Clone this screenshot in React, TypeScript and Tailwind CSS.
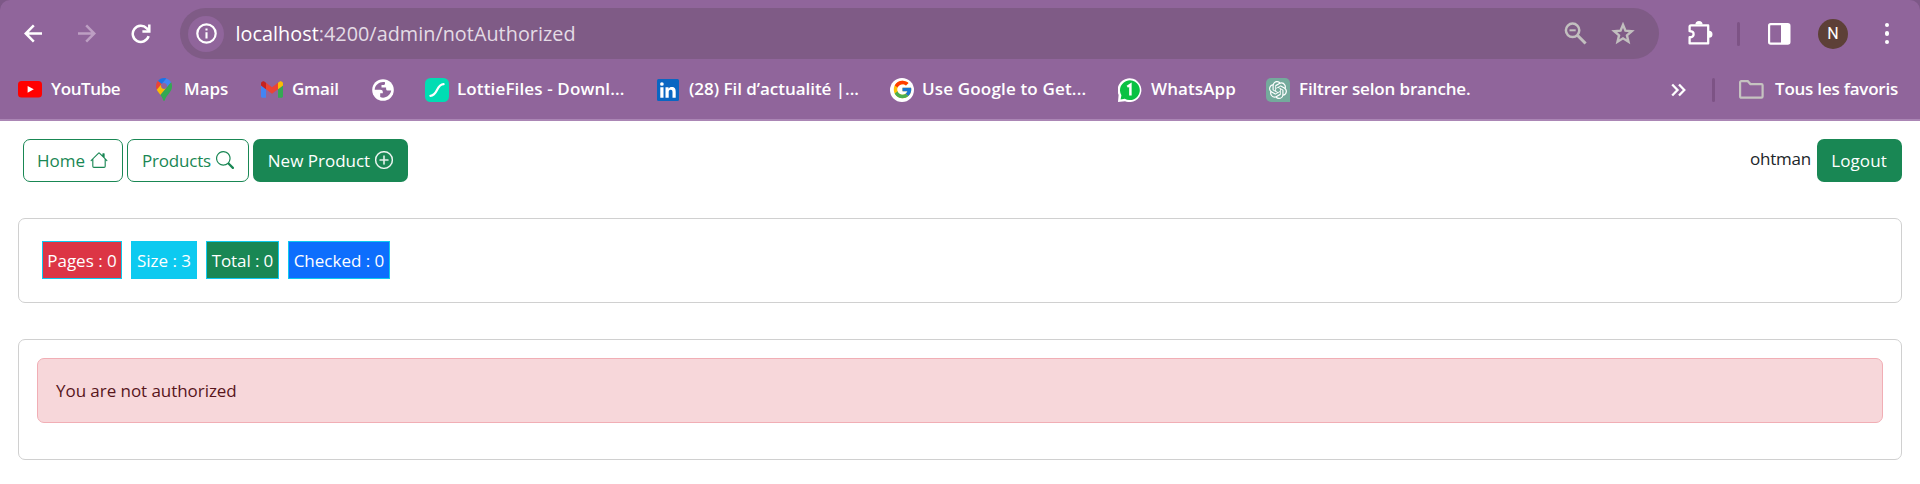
import type { ReactNode } from 'react';
import { FcGoogle } from 'react-icons/fc';
import { SiOpenai } from 'react-icons/si';
import { BsHouse, BsPlusCircle, BsSearch } from 'react-icons/bs';

function ArrowIcon({ className }: { className: string }) {
  return (
    <svg width="19" height="19" viewBox="0 0 19 19" fill="none" stroke="currentColor" strokeWidth="2.5" className={className}>
      <path d="M18 9.5H2M9.8 1.4L1.7 9.5l8.1 8.1" />
    </svg>
  );
}

function RefreshIcon() {
  return (
    <svg width="20" height="20" viewBox="0 0 20 20" fill="none" stroke="#fff" strokeWidth="2.5">
      <path d="M17.6 12.2A8.1 8.1 0 1 1 15.800 4.300L18 6.700" />
      <path d="M18.300.6v6.900h-6.900" />
    </svg>
  );
}

function InfoIcon() {
  return (
    <svg width="21" height="21" viewBox="0 0 21 21" fill="none">
      <circle cx="10.5" cy="10.5" r="9.2" stroke="#fff" strokeWidth="2.2" />
      <path d="M10.5 9.3v6.2M10.5 5.4v2.2" stroke="#fff" strokeWidth="2.1" />
    </svg>
  );
}

function ZoomOutIcon() {
  return (
    <svg width="23" height="23" viewBox="0 0 23 23" fill="none" stroke="#c2bfbf">
      <circle cx="8.6" cy="8.3" r="6.7" strokeWidth="2.5" />
      <path d="M5.5 8.3h6.2" strokeWidth="2" />
      <path d="M13.4 13.2l8.2 8.3" strokeWidth="3" />
    </svg>
  );
}

function StarIcon() {
  return (
    <svg width="24" height="23" viewBox="0 0 24 23" fill="none" stroke="#c2bfbf" strokeWidth="2.4">
      <path d="M12 2.8l2.45 5.9 6.35.55-4.85 4.15 1.5 6.25L12 16.3l-5.45 3.35 1.5-6.25L3.2 9.25l6.35-.55z" />
    </svg>
  );
}

function ExtensionIcon() {
  return (
    <svg width="26" height="26" viewBox="0 0 26 26">
      <path
        d="M4 5.4h17.2v18H2.6v-6.2c2.6 0 4-1.3 4-3s-1.4-3-4-3V6.8c0-.8.6-1.4 1.4-1.4z"
        fill="none"
        stroke="#fff"
        strokeWidth="2.3"
        strokeLinejoin="round"
      />
      <path d="M8.4 4.6a3.6 3.6 0 0 1 7.2 0zM22 10.8a3.5 3.5 0 0 1 0 7z" fill="#fff" />
    </svg>
  );
}

function SidePanelIcon() {
  return (
    <svg width="23" height="22" viewBox="0 0 23 22">
      <rect x="1.1" y="1.1" width="20.3" height="19.6" rx="1.6" fill="none" stroke="#fff" strokeWidth="2.2" />
      <path d="M13 1h8.4v19.6H13z" fill="#fff" />
    </svg>
  );
}

function YouTubeIcon() {
  return (
    <svg width="24" height="17" viewBox="0 0 24 17">
      <rect width="24" height="16.6" rx="3.6" fill="#f00" />
      <path d="M9.6 4.9v6.8l6.2-3.4z" fill="#fff" />
    </svg>
  );
}

function MapsIcon() {
  return (
    <svg width="16" height="23" viewBox="0 0 92.3 132.3">
      <path fill="#1a73e8" d="M60.2 2.2C55.8.8 51 0 46.1 0 32 0 19.3 6.4 10.8 16.5l21.8 18.3z" />
      <path fill="#ea4335" d="M10.8 16.5C4.1 24.5 0 34.9 0 46.1c0 8.7 1.7 15.7 4.6 22l28-33.3z" />
      <path fill="#4285f4" d="M46.2 28.5a17.7 17.7 0 0 1 13.5 29.1l27.5-32.7A46.1 46.1 0 0 0 60.3 2.3L32.6 34.9a17.6 17.6 0 0 1 13.6-6.4" />
      <path fill="#fbbc04" d="M46.2 63.8a17.7 17.7 0 0 1-13.5-29L4.5 68.1c4.8 10.6 12.8 19.2 21 29.9l34.1-40.5a17.5 17.5 0 0 1-13.4 6.3" />
      <path fill="#34a853" d="M59.1 109.2c15.4-24.1 33.3-35 33.3-63 0-7.7-1.9-14.9-5.2-21.3L25.6 98c2.6 3.4 5.3 7.3 7.9 11.3 9.4 14.5 6.8 23.1 12.8 23.1s3.4-8.7 12.8-23.2" />
    </svg>
  );
}

function GmailIcon() {
  return (
    <svg width="22" height="17" viewBox="52 42 88 66">
      <path fill="#4285f4" d="M58 108h14V74L52 59v43c0 3.32 2.69 6 6 6" />
      <path fill="#34a853" d="M120 108h14c3.32 0 6-2.69 6-6V59l-20 15" />
      <path fill="#fbbc04" d="M120 48v26l20-15v-8c0-7.42-8.47-11.65-14.4-7.2" />
      <path fill="#ea4335" d="M72 74V48l24 18 24-18v26L96 92" />
      <path fill="#c5221f" d="M52 51v8l20 15V48l-5.6-4.2c-5.94-4.45-14.4-.22-14.4 7.2" />
    </svg>
  );
}

function GlobeIcon() {
  return (
    <svg width="22" height="22" viewBox="0 0 22 22">
      <circle cx="11" cy="11" r="10.8" fill="#fff" />
      <path
        d="M13 3.2C8 2.2 3 5.6 2.7 10.7h5.6c1.7 0 2.5.9 2.5 2.3v1.2h-2.6v3.9c4.8 1.9 10.3-1.4 11-6.5h-3.1c-1.3 0-2-.7-2-1.9V8.5h-4.6V6h2.3C12.7 6 13 5.4 13 4.6z"
        fill="#90659b"
      />
    </svg>
  );
}

function LottieIcon() {
  return (
    <svg width="24" height="24" viewBox="0 0 24 24">
      <rect width="24" height="24" rx="5.5" fill="#00ddb3" />
      <path d="M5.4 17.8C13 17.6 11 6.4 18.6 6.2" fill="none" stroke="#fff" strokeWidth="2.2" strokeLinecap="round" />
    </svg>
  );
}

function LinkedInIcon() {
  return (
    <svg width="22" height="22" viewBox="0 0 22 22">
      <rect width="22" height="22" rx="1.5" fill="#0a66c2" />
      <path
        d="M3.3 8.3h3.2v10.4H3.3zM8.5 8.3h3v1.4c.6-1 1.7-1.7 3.2-1.7 3.2 0 4 2 4 4.8v5.9h-3.2v-5.3c0-1.4-.2-2.7-1.8-2.7s-2 1.2-2 2.6v5.4H8.5z"
        fill="#fff"
      />
      <circle cx="4.9" cy="5" r="1.85" fill="#fff" />
    </svg>
  );
}

function GoogleIcon() {
  return (
    <span className="flex size-6 items-center justify-center rounded-full bg-white">
      <FcGoogle size={21} />
    </span>
  );
}

function WhatsAppIcon() {
  return (
    <svg width="24" height="24" viewBox="0 0 24 24">
      <path d="M0 24l.6-7A11.9 11.9 0 1 1 7 23.2z" fill="#fff" />
      <path d="M2.6 21.5l.8-4.2A9.9 9.9 0 1 1 6.8 20.7z" fill="#0ac143" />
      <path d="M9.3 8.7l3.1-2v10.7" fill="none" stroke="#fff" strokeWidth="2.5" />
    </svg>
  );
}

function OpenAiIcon() {
  return (
    <span className="flex size-6 items-center justify-center rounded-[5px] rounded-br-none bg-[#74aa9c] text-white">
      <SiOpenai size={18} />
    </span>
  );
}

function FolderIcon() {
  return (
    <svg width="25" height="19" viewBox="0 0 25 19">
      <path
        d="M2.3 1.2h6.5l2.6 2.9h11c.7 0 1.2.5 1.2 1.2v11.2c0 .7-.5 1.2-1.2 1.2H2.3c-.7 0-1.2-.5-1.2-1.2V2.4c0-.7.5-1.2 1.2-1.2z"
        fill="none"
        stroke="#c5c3c0"
        strokeWidth="2.2"
      />
    </svg>
  );
}

function Bookmark({ icon, label, className }: { icon: ReactNode; label?: string; className: string }) {
  return (
    <div className={`flex h-6 shrink-0 items-center whitespace-nowrap ${className}`}>
      <span className="flex shrink-0 items-center">{icon}</span>
      {label && <span className="mt-[-2px]">{label}</span>}
    </div>
  );
}

function BrowserBar() {
  return (
    <div className="h-[121px] bg-[#7d5887]">
      <header className="h-[121px] rounded-t-[10px] border-b-2 border-[#ab86b5] bg-[#90659b] text-white">
        <div className="flex h-[67px] items-center">
          <ArrowIcon className="ml-[24px]" />
          <ArrowIcon className="ml-[34px] rotate-180 text-[#bd9fc3]" />
          <span className="ml-[35px]">
            <RefreshIcon />
          </span>
          <div className="ml-[29px] flex h-[51px] w-[1479px] items-center rounded-full bg-[#7f5b86] pl-2">
            <span className="flex size-9 items-center justify-center rounded-full bg-[#90659b]">
              <InfoIcon />
            </span>
            <span className="ml-[11.5px] grow text-[19.8px] leading-[28px] tracking-[0.04px] whitespace-nowrap text-[#e4dbe5]">
              <span className="text-white">localhost</span>:4200/admin/notAuthorized
            </span>
            <ZoomOutIcon />
            <span className="mr-[24px] ml-[24px]">
              <StarIcon />
            </span>
          </div>
          <span className="ml-[28px] flex items-center pb-px">
            <ExtensionIcon />
          </span>
          <span className="ml-[24px] h-6 w-[3px] rounded-full bg-[#7d5385]" />
          <span className="ml-[28px]">
            <SidePanelIcon />
          </span>
          <span className="ml-[27px] flex size-[30px] items-center justify-center rounded-full bg-[#5d4037] font-['Roboto',sans-serif] text-[16px]">
            N
          </span>
          <span className="ml-[36.5px] flex w-[4px] flex-col gap-1">
            <i className="size-[4.5px] rounded-full bg-white" />
            <i className="size-[4.5px] rounded-full bg-white" />
            <i className="size-[4.5px] rounded-full bg-white" />
          </span>
        </div>
        <div className="flex h-[45px] items-center pl-[18px] text-[17px] font-semibold">
          <Bookmark className="w-[138px] gap-[9px] tracking-[-0.4px]" icon={<YouTubeIcon />} label="YouTube" />
          <Bookmark className="w-[105px] gap-[12px]" icon={<MapsIcon />} label="Maps" />
          <Bookmark className="w-[111px] gap-[9px] tracking-[-0.25px]" icon={<GmailIcon />} label="Gmail" />
          <Bookmark className="w-[53px]" icon={<GlobeIcon />} />
          <Bookmark className="w-[232px] gap-[8px] tracking-[0.13px]" icon={<LottieIcon />} label="LottieFiles - Downl..." />
          <Bookmark className="w-[233px] gap-[10px] tracking-[-0.04px]" icon={<LinkedInIcon />} label="(28) Fil d’actualité |..." />
          <Bookmark className="w-[228px] gap-[8px] tracking-[0.17px]" icon={<GoogleIcon />} label="Use Google to Get..." />
          <Bookmark className="w-[148px] gap-[9px] tracking-[0.1px]" icon={<WhatsAppIcon />} label="WhatsApp" />
          <Bookmark className="w-[405px] gap-[9px] tracking-[-0.15px]" icon={<OpenAiIcon />} label="Filtrer selon branche." />
          <svg width="15" height="14" viewBox="0 0 15 14" fill="none" stroke="#fff" strokeWidth="2.3">
            <path d="M1.2 1.5L6.5 7l-5.3 5.5M8 1.5L13.3 7 8 12.5" />
          </svg>
          <span className="ml-[26px] h-6 w-[3px] rounded-full bg-[#7d5385]" />
          <Bookmark className="ml-[24px] gap-[11px] tracking-[-0.22px]" icon={<FolderIcon />} label="Tous les favoris" />
        </div>
      </header>
    </div>
  );
}

const badges = [
  { text: 'Pages : 0', style: 'w-[80px] bg-[#dc3545]' },
  { text: 'Size : 3', style: 'w-[66px] bg-[#0dcaf0]' },
  { text: 'Total : 0', style: 'w-[73px] bg-[#198754] tracking-[-0.1px]' },
  { text: 'Checked : 0', style: 'w-[102px] bg-[#0d6efd]' },
];

export default function App() {
  return (
    <div className="h-[484px] overflow-hidden bg-white font-['Open_Sans','Noto_Sans',sans-serif]">
      <BrowserBar />
      <main className="px-[18px] pt-[18px] text-[17px] leading-[27px]">
        <nav className="flex h-[43px] pl-[5px]">
          <button className="flex w-[100px] items-center justify-center gap-[5px] rounded-[7px] border border-[#198754] pr-px text-[#198754]">
            Home <BsHouse className="mt-[-2px] size-[18px]" />
          </button>
          <button className="ml-1 flex w-[122px] items-center justify-center gap-[5px] rounded-[7px] border border-[#198754] tracking-[-0.2px] text-[#198754]">
            Products <BsSearch className="mt-[-2px] size-[18px]" />
          </button>
          <button className="ml-1 flex w-[155px] items-center justify-center gap-[5px] rounded-[7px] bg-[#198754] whitespace-nowrap text-white">
            New Product <BsPlusCircle className="mt-[-2px] size-[18px]" stroke="currentColor" strokeWidth="0.3" />
          </button>
          <span className="mt-[6px] ml-auto tracking-[-0.2px] text-[#212529]">ohtman</span>
          <button className="ml-[6px] w-[85px] rounded-[7px] bg-[#198754] pr-px tracking-[0.1px] text-white">Logout</button>
        </nav>
        <section className="mt-[36px] flex h-[85px] gap-[9px] rounded-[7px] border border-[#d0d0d0] pt-[22px] pl-[23px]">
          {badges.map((b) => (
            <span key={b.text} className={`flex h-[38px] items-center justify-center border border-[#0dcaf0] whitespace-nowrap text-white ${b.style}`}>
              {b.text}
            </span>
          ))}
        </section>
        <section className="mt-[36px] h-[121px] rounded-[7px] border border-[#d0d0d0] px-[18px] pt-[18px]">
          <div className="flex h-[65px] items-center rounded-[7px] border border-[#f1aeb5] bg-[#f7d7da] pl-[18px] tracking-[-0.05px] text-[#58151c]">
            You are not authorized
          </div>
        </section>
      </main>
    </div>
  );
}
